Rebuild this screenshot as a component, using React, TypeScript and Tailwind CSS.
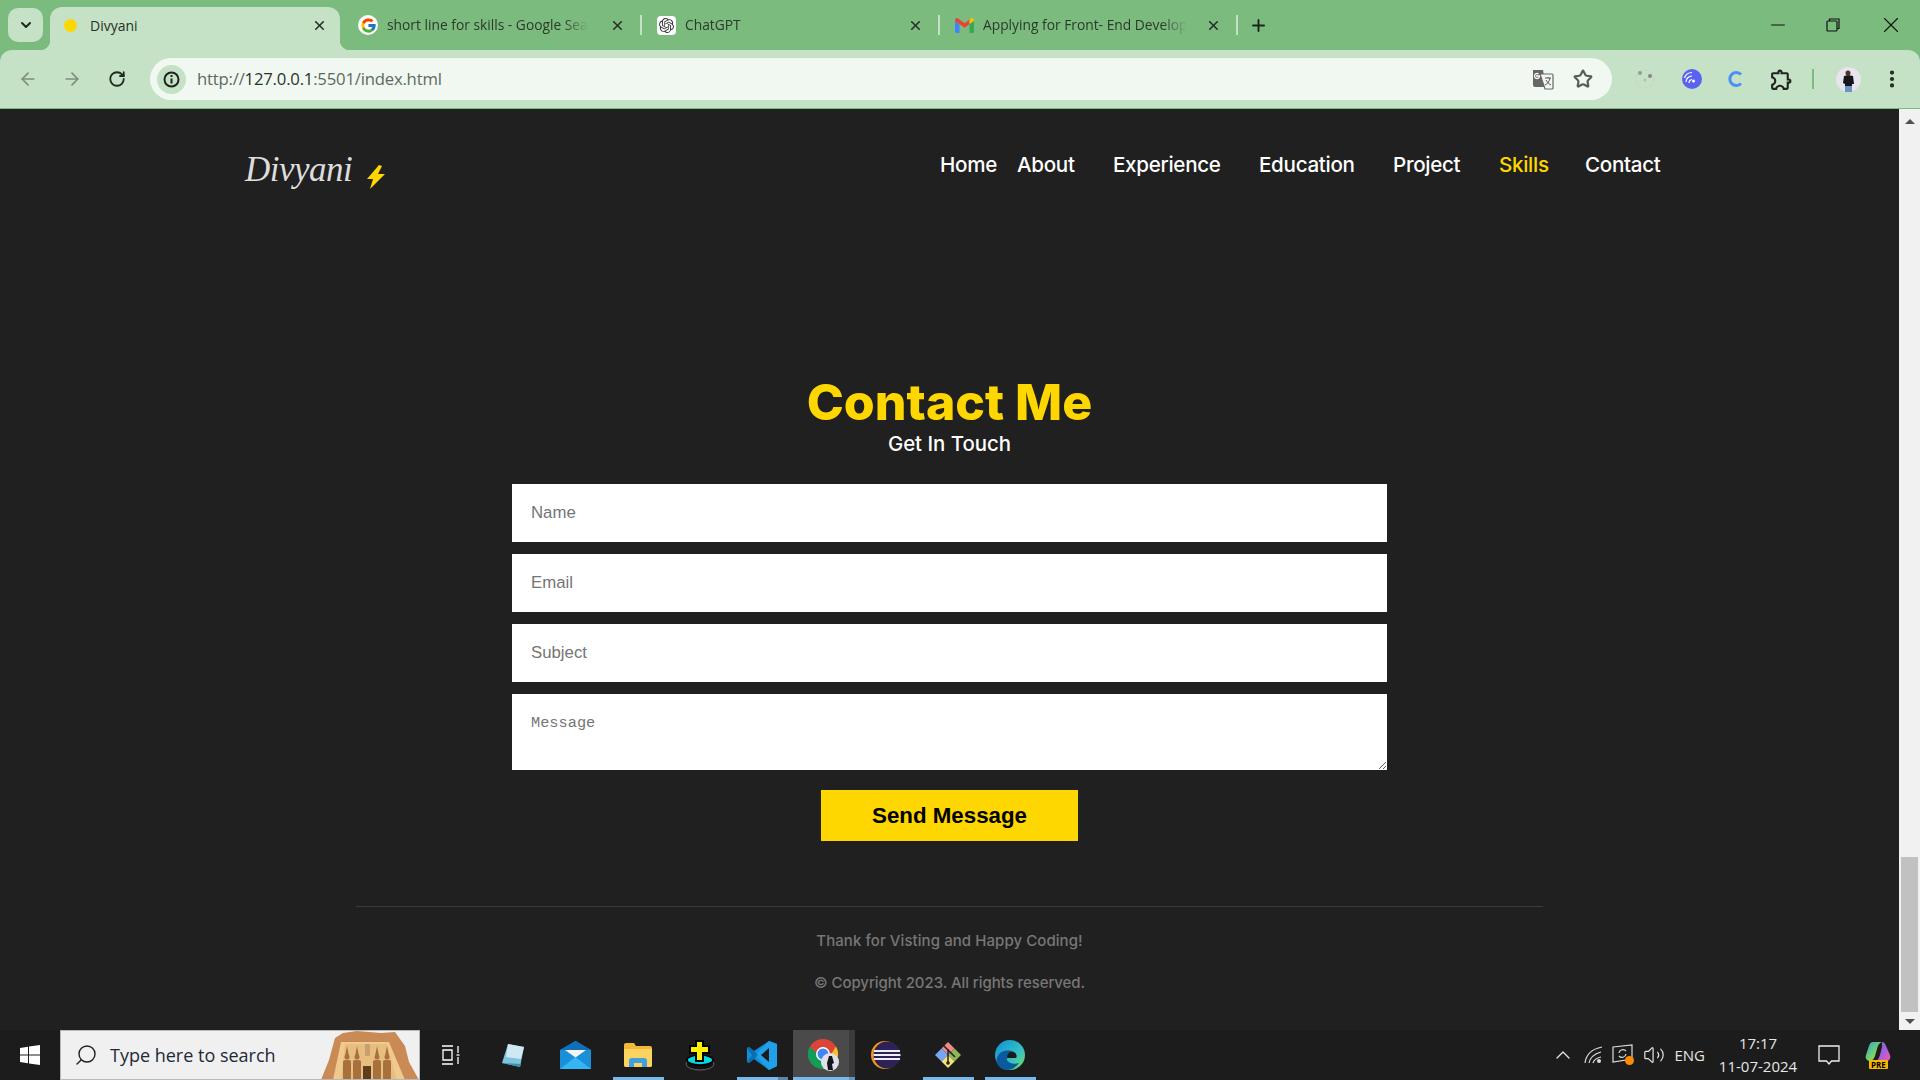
import React from 'react';
import { ArrowLeft, ArrowRight, RotateCw, Star, X, Plus, ChevronDown, Minus, ChevronUp, Search, EllipsisVertical, Volume2 } from 'lucide-react';
import { FcGoogle } from 'react-icons/fc';
import { SiOpenai } from 'react-icons/si';
import { MdOutlineExtension } from 'react-icons/md';

const navLinks = [
  { label: 'Home', cls: 'w-[77px]', color: 'text-white' },
  { label: 'About', cls: 'w-[96px]', color: 'text-white' },
  { label: 'Experience', cls: 'w-[146px]', color: 'text-white' },
  { label: 'Education', cls: 'w-[134px]', color: 'text-white' },
  { label: 'Project', cls: 'w-[106px]', color: 'text-white' },
  { label: 'Skills', cls: 'w-[86px]', color: 'text-[#ffd700]' },
  { label: 'Contact', cls: 'w-[78px]', color: 'text-white' },
];

const GmailIcon = () => (
  <svg width="19" height="15" viewBox="0 0 19 15">
    <path d="M0 3v10.500A1.500 1.500 0 0 0 1.500 15H4.500V6z" fill="#4285f4" />
    <path d="M14.500 6v9h3A1.500 1.500 0 0 0 19 13.500V3z" fill="#34a853" />
    <path d="M0 3l4.500 3 5 3.800 5-3.800V1.500L9.500 5.300 4.500 1.500 3 .4C1.500-.5 0 .8 0 2.400z" fill="#ea4335" />
    <path d="M14.500 1.500V6L19 3v-.6c0-1.600-1.500-2.900-3-2z" fill="#fbbc04" />
  </svg>
);

const ChromeTab: React.FC<{ icon: React.ReactNode; title: string; textCls: string }> = ({ icon, title, textCls }) => (
  <div className="flex items-center h-full shrink-0 w-[267px]">
    <div className="w-[20px] flex justify-center shrink-0">{icon}</div>
    <span className={`ml-[9px] whitespace-nowrap text-[13.8px] text-[#2b3a2c] [mask-image:linear-gradient(to_right,black_88%,transparent)] ${textCls}`}>{title}</span>
    <X size={15} strokeWidth={2.6} className="ml-auto text-[#2a2f2a] shrink-0" />
  </div>
);

const TabStrip = () => (
  <div className="h-[50px] shrink-0 bg-[#7bbb7e] flex font-['Open_Sans',sans-serif]">
    <div className="w-[35px] h-[34px] ml-[8px] mt-[8px] rounded-[10px] bg-[#c5e1c6] flex items-center justify-center">
      <ChevronDown size={16} strokeWidth={3} className="text-[#1f2a20]" />
    </div>
    <div className="relative w-[290px] h-[43px] ml-[7px] mt-[7px] rounded-t-[12px] bg-[#c5e1c6] flex items-center pl-[14px] pr-[13px] pb-[7px]">
      <span className="absolute left-[-10px] bottom-0 w-[10px] h-[10px] bg-[radial-gradient(circle_at_0_0,#7bbb7e_10px,#c5e1c6_10.5px)]" />
      <span className="absolute right-[-10px] bottom-0 w-[10px] h-[10px] bg-[radial-gradient(circle_at_100%_0,#7bbb7e_10px,#c5e1c6_10.5px)]" />
      <span className="w-[13px] h-[13px] rounded-full bg-[#ffd700]" />
      <span className="ml-[13px] text-[14px] text-[#253226]">Divyani</span>
      <X size={15} strokeWidth={2.6} className="ml-auto text-[#2a2f2a]" />
    </div>
    <div className="flex items-center h-[42px] mt-[4px] ml-[18px]">
      <ChromeTab icon={<span className="w-[20px] h-[20px] rounded-full bg-white flex items-center justify-center"><FcGoogle size={17} /></span>} title="short line for skills - Google Sea" textCls="w-auto" />
      <span className="w-[2px] h-[20px] bg-[#c5e1c6] ml-[15px] mr-[14px]" />
      <ChromeTab icon={<span className="w-[19px] h-[19px] rounded-[4px] bg-white flex items-center justify-center"><SiOpenai size={15} color="#333" /></span>} title="ChatGPT" textCls="w-[100px]" />
      <span className="w-[2px] h-[20px] bg-[#c5e1c6] ml-[15px] mr-[14px]" />
      <ChromeTab icon={<GmailIcon />} title="Applying for Front- End Develop" textCls="w-auto" />
      <span className="w-[2px] h-[20px] bg-[#c5e1c6] ml-[15px]" />
      <Plus size={19} strokeWidth={2.4} className="ml-[11px] text-[#1d261e]" />
    </div>
    <div className="ml-auto flex items-center h-[50px] text-[#111]">
      <Minus size={22} strokeWidth={1.1} className="mr-[37px]" />
      <svg width="14" height="14" viewBox="0 0 14 14" fill="none" stroke="#111" strokeWidth="1.2" className="mr-[38px]">
        <rect x="1" y="3" width="10" height="10" rx="1" />
        <path d="M3.500 3V1h9.500v9.500H11" />
      </svg>
      <X size={26} strokeWidth={1} className="mr-[16px]" />
    </div>
  </div>
);

const ToolbarIcons = () => (
  <div className="flex items-center h-full ml-[21px] text-[#2b342c]">
    <svg width="24" height="24" viewBox="0 0 24 24" className="mr-[24px]">
      <circle cx="12" cy="12" r="9" fill="none" stroke="#ccc" strokeWidth="1" strokeDasharray="3 3" />
      <circle cx="7" cy="6" r="2" fill="#999" />
      <circle cx="17" cy="9" r="2" fill="#888" />
      <circle cx="12" cy="13" r="1.500" fill="#bbb" />
    </svg>
    <svg width="22" height="22" viewBox="0 0 22 22" fill="none" className="mr-[23px]">
      <circle cx="11" cy="11" r="10" fill="#5a63f0" />
      <path d="M5 14a6 6 0 0 1 6-6M8 15a3.500 3.500 0 0 1 3-3.500M3.500 10A8 8 0 0 1 11 4.500" stroke="#fff" strokeWidth="1.200" />
      <circle cx="12.500" cy="13" r="1.500" fill="#fff" />
    </svg>
    <svg width="18" height="18" viewBox="0 0 18 18" fill="none" className="mr-[25px]">
      <path d="M15 4.500a6.500 6.500 0 1 0 0 9" stroke="#4a90f5" strokeWidth="3" />
    </svg>
    <MdOutlineExtension size={25} className="text-[#20261f] mr-[18px]" />
    <span className="w-[2px] h-[20px] bg-[#7bbb7e] mr-[22px]" />
    <svg width="25" height="25" viewBox="0 0 25 25" className="mr-[20px]">
      <circle cx="12.500" cy="12.500" r="12.500" fill="#e8e4ee" />
      <path d="M8 9l4-1 5 1 1 8h-2v8H9v-8l-2-1z" fill="#15151c" />
      <circle cx="12" cy="6" r="2.500" fill="#4a3428" />
      <path d="M9 19h7v6H9z" fill="#6b93c4" />
    </svg>
    <EllipsisVertical size={22} strokeWidth={2.6} className="text-[#1f2a20]" />
  </div>
);

const Toolbar = () => (
  <div className="h-[59px] shrink-0 bg-[#7bbb7e]">
    <div className="h-[58px] rounded-t-[12px] bg-[#c5e1c6] flex items-center pl-[18px] font-['Open_Sans',sans-serif]">
      <ArrowLeft size={20} strokeWidth={2} className="text-[#7d8e7f]" />
      <ArrowRight size={20} strokeWidth={2} className="text-[#7d8e7f] ml-[24px]" />
      <RotateCw size={18} strokeWidth={2.4} className="text-[#1f2a20] ml-[26px]" />
      <div className="ml-[24px] w-[1462px] h-[42px] rounded-full bg-[#f1f8f2] flex items-center pl-[7px] pr-[19px]">
        <span className="w-[29px] h-[29px] rounded-full bg-[#c5e1c6] flex items-center justify-center">
          <svg width="17" height="17" viewBox="0 0 17 17" fill="none" stroke="#1e241e" strokeWidth="2">
            <circle cx="8.500" cy="8.500" r="7" />
            <path d="M8.500 7.500v5M8.500 4v2" />
          </svg>
        </span>
        <span className="ml-[11px] text-[16.7px] tracking-[-0.2px] text-[#5c6a5e]">http://<span className="text-[#27352a]">127.0.0.1</span>:5501/index.html</span>
        <div className="ml-auto flex items-center">
          <svg width="22" height="22" viewBox="0 0 22 22" className="mr-[19px]">
            <path d="M1 2h10l3 17H3a2 2 0 0 1-2-2z" fill="#666" />
            <path d="M8 6h12a1 1 0 0 1 1 1v13a1 1 0 0 1-1 1h-7z" fill="#f1f8f2" stroke="#666" strokeWidth="1.200" />
            <path d="M4 8h3.500a2.500 2.500 0 1 1-1-2" fill="none" stroke="#fff" strokeWidth="1.300" />
            <path d="M13 10h6M16 9v1M18 10c-.5 3-2.500 6-5 7M14 12c1 2 3 4 5 5" fill="none" stroke="#555" strokeWidth="1" />
          </svg>
          <Star size={20} strokeWidth={2.6} className="text-[#555d56]" />
        </div>
      </div>
      <ToolbarIcons />
    </div>
  </div>
);

const Header = () => (
  <header className="h-[112px] shrink-0 flex items-center">
    <div className="ml-[245px] flex items-center w-[695px]">
      <span className="font-['Liberation_Serif',serif] italic text-[35px] leading-none text-[#dddddd] mt-[8px] tracking-[-0.5px] font-thin">Divyani</span>
      <svg width="18" height="24" viewBox="0 0 18 24" className="ml-[15px] mt-[23px]">
        <path d="M12 0L0 14h6L3 24 18 9h-7l4-8z" fill="#ffd700" />
      </svg>
    </div>
    <nav className="flex">
      {navLinks.map((link) => (
        <a key={link.label} className={`${link.cls} ${link.color} text-[20.6px] font-medium tracking-[-0.3px] whitespace-nowrap font-['Inter',sans-serif]`}>{link.label}</a>
      ))}
    </nav>
  </header>
);

const fieldCls = "w-full h-[58px] bg-white px-[19px] text-[16.8px] text-black placeholder:text-[#757575] font-['Liberation_Sans',sans-serif] outline-none";

const ContactForm = () => (
  <section className="flex flex-col items-center mt-[152px]">
    <h1 className="text-[50px] leading-[59px] font-extrabold text-[#ffd700] font-['Inter',sans-serif]">Contact Me</h1>
    <p className="text-[20.4px] leading-[24px] font-medium text-white font-['Inter',sans-serif]">Get In Touch</p>
    <form className="w-[875px] mt-[28px] flex flex-col items-center gap-[12px]">
      <input className={fieldCls} placeholder="Name" />
      <input className={fieldCls} placeholder="Email" />
      <input className={fieldCls} placeholder="Subject" />
      <textarea className="block w-full h-[76px] bg-white px-[19px] pt-[19px] pb-[15px] text-[15.3px] leading-[20px] text-black placeholder:text-[#757575] font-['Liberation_Mono',monospace] outline-none resize-y" placeholder="Message" />
      <button type="button" className="mt-[8px] w-[257px] h-[51px] bg-[#ffd700] text-black text-[22.3px] font-bold font-['Liberation_Sans',sans-serif]">Send Message</button>
    </form>
  </section>
);

const Footer = () => (
  <footer className="mt-[65px] mx-[356px] border-t border-[#3a3a3a] pt-[22px] flex flex-col items-center gap-[18px] text-[15px] leading-[24px] font-medium text-[#777777] font-['Inter',sans-serif]">
    <p className="tracking-[0.07px]">Thank for Visting and Happy Coding!</p>
    <p className="tracking-[-0.07px]">© Copyright 2023. All rights reserved.</p>
  </footer>
);

const Scrollbar = () => (
  <div className="w-[21px] shrink-0 bg-[#f1f1f1] flex flex-col items-center">
    <div className="h-[24px] flex items-center justify-center">
      <span className="w-0 h-0 border-x-[5px] border-x-transparent border-b-[5px] border-b-[#505050]" />
    </div>
    <div className="flex-1" />
    <div className="w-[17px] h-[155px] bg-[#c1c1c1]" />
    <div className="h-[18px] flex items-center justify-center">
      <span className="w-0 h-0 border-x-[5px] border-x-transparent border-t-[5px] border-t-[#505050]" />
    </div>
  </div>
);

const AbuSimbel = () => (
  <svg width="98" height="50" viewBox="0 0 98 50">
    <path d="M0 50L8 30 14 8 22 3 36 1 60 3 74 2 84 16 88 32 98 50z" fill="#c98a55" />
    <path d="M12 50L20 12H68L84 50z" fill="#f0c98f" />
    <path d="M20 50L24 14H66L76 50z" fill="#e8bd80" />
    <rect x="44" y="14" width="5" height="12" fill="#c9a06d" />
    <rect x="42" y="36" width="8" height="14" fill="#5e3d1b" />
    {[26, 36, 56, 66].map((x) => (
      <g key={x} fill="#a8703c">
        <path d={`M${x - 2} 26L${x} 16L${x + 2} 26z`} />
        <circle cx={x} cy="27" r="2.500" />
        <rect x={x - 4} y="30" width="8" height="20" rx="2" />
      </g>
    ))}
  </svg>
);

const taskSlot = "w-[62px] h-full shrink-0 flex items-center justify-center";

const Taskbar = () => (
  <div className="h-[50px] shrink-0 bg-[#1c1c1c] flex items-center font-['Open_Sans',sans-serif]">
    <div className="w-[60px] flex justify-center">
      <svg width="20" height="20" viewBox="0 0 20 20" fill="#fff">
        <path d="M0 3l8-1.200V9.500H0zM9 1.600L20 0v9.500H9zM0 10.500h8v7.700L0 17zM9 10.500h11V20L9 18.400z" />
      </svg>
    </div>
    <div className="w-[360px] h-full bg-[#f0f0f0] border border-[#b8b8b8] flex items-center overflow-hidden">
      <Search size={24} strokeWidth={1.400} className="ml-[13px] text-[#222] -scale-x-100" />
      <span className="ml-[12px] text-[18px] text-[#1e2a36]">Type here to search</span>
      <span className="ml-auto flex"><AbuSimbel /></span>
    </div>
    <div className={taskSlot}>
      <svg width="20" height="20" viewBox="0 0 20 20" fill="none" stroke="#fff" strokeWidth="1.300">
        <path d="M1 1h11M1 19h11M2 5h9v10H2zM17 1v7M17 12v7" />
        <path d="M15.500 10h3" />
      </svg>
    </div>
    <div className={taskSlot}>
      <svg width="28" height="28" viewBox="0 0 28 28">
        <path d="M9 3l16 3-4 20-18-4z" fill="#7fc4dc" />
        <path d="M9 3l16 3-3 12-15-2z" fill="#cfe9f4" />
        <path d="M3 22l18 4 1-3z" fill="#3f8fa8" />
      </svg>
    </div>
    <div className="w-[63px] h-full shrink-0 flex items-center justify-center">
      <svg width="31" height="28" viewBox="0 0 31 28">
        <path d="M15.500 0L31 9v19H0V9z" fill="#1a90d9" />
        <path d="M0 28l15.500-12L31 28z" fill="#35b6f2" />
        <path d="M15.500 0L31 9H0z" fill="#0f6fb8" />
        <path d="M5 9h21l-10.500 7.500z" fill="#f4f4f4" />
      </svg>
    </div>
    <div className={`${taskSlot} relative`}>
      <svg width="28" height="24" viewBox="0 0 28 24">
        <path d="M0 2a2 2 0 0 1 2-2h8l2 3h14a2 2 0 0 1 2 2v17a2 2 0 0 1-2 2H2a2 2 0 0 1-2-2z" fill="#f3b834" />
        <path d="M0 6h28v16a2 2 0 0 1-2 2H2a2 2 0 0 1-2-2z" fill="#fbd360" />
        <path d="M5 24v-6a3 3 0 0 1 3-3h12a3 3 0 0 1 3 3v6h-5v-4h-8v4z" fill="#3f9fdf" />
      </svg>
      <span className="absolute left-[6px] bottom-0 w-[51px] h-[3px] bg-[#76b9ed]" />
    </div>
    <div className={taskSlot}>
      <svg width="30" height="31" viewBox="0 0 30 31">
        <ellipse cx="15" cy="24" rx="14" ry="6" fill="#111" stroke="#666" strokeWidth="1" />
        <ellipse cx="15" cy="20" rx="13" ry="5" fill="#00d8e6" stroke="#000" strokeWidth="1.500" />
        <path d="M11 1h7v5h6v7h-6v8h-7v-8H5V6h6z" fill="#ffef00" stroke="#000" strokeWidth="2" />
      </svg>
    </div>
    <div className={`${taskSlot} relative`}>
      <svg width="30" height="30" viewBox="0 0 30 30">
        <path d="M22 1L30 4v22l-8 4L7 19l-5 4-2-1V8l2-1 5 4z" fill="#0e8fd8" />
        <path d="M22 1L8 15l14 15 8-4V4z" fill="#1fa0e8" />
        <path d="M22 8l-8 7 8 7z" fill="#1c1c1c" />
        <path d="M2 7l5 4 4 4-4 4-5 4-2-1 5-7-5-7z" fill="#0a6fb0" />
      </svg>
      <span className="absolute left-[6px] bottom-0 w-[41px] h-[3px] bg-[#76b9ed]" />
      <span className="absolute left-[47px] bottom-0 w-[10px] h-[3px] bg-[#5a86aa]" />
    </div>
    <div className={`${taskSlot} relative bg-[#4a4a4a]`}>
      <svg width="32" height="32" viewBox="0 0 32 32">
        <circle cx="15" cy="15" r="15" fill="#db4437" />
        <path d="M28 7.500A15 15 0 0 1 15 30l7-13z" fill="#fbc02d" />
        <path d="M2 7.500A15 15 0 0 0 15 30l7-13-7 4z" fill="#0f9d58" />
        <circle cx="15" cy="15" r="7" fill="#fff" />
        <circle cx="15" cy="15" r="5.500" fill="#4285f4" />
        <circle cx="22" cy="23" r="9" fill="#dfe1ea" />
        <path d="M21 17h3l2 7-2 1 1 6h-5l-1-7z" fill="#15151c" />
      </svg>
      <span className="absolute left-0 bottom-0 w-[56px] h-[3px] bg-[#76b9ed]" />
      <span className="absolute left-[56px] top-0 w-[6px] h-full bg-[#3b3b3b]" />
      <span className="absolute left-[56px] bottom-0 w-[6px] h-[3px] bg-[#6394bd]" />
    </div>
    <div className={taskSlot}>
      <svg width="30" height="28" viewBox="0 0 30 28">
        <circle cx="14" cy="14" r="14" fill="#f7941e" />
        <circle cx="16" cy="14" r="13.500" fill="#2c2255" />
        <path d="M3 10h26M2.500 14h27M3 18h26" stroke="#f0eef8" strokeWidth="2" />
      </svg>
    </div>
    <div className={`${taskSlot} relative`}>
      <svg width="30" height="30" viewBox="0 0 30 30">
        <path d="M15 2l6.500 6.500L15 15 8.500 8.500z" fill="#f08a8a" />
        <path d="M15 15l6.500-6.500L28 15l-6.500 6.500z" fill="#8fb855" />
        <path d="M2 15l6.500-6.500L15 15l-6.500 6.500z" fill="#75a7f5" />
        <path d="M15 15l6.500 6.500L15 28l-6.500-6.500z" fill="#f6e27d" />
        <path d="M15 9v14M10 5l5 5 7 7" stroke="#222" strokeWidth="1.500" fill="none" />
        <circle cx="15" cy="23" r="1.800" fill="#222" />
      </svg>
      <span className="absolute left-[6px] bottom-0 w-[51px] h-[3px] bg-[#76b9ed]" />
    </div>
    <div className={`${taskSlot} relative`}>
      <svg width="30" height="30" viewBox="0 0 30 30">
        <defs>
          <linearGradient id="edgeTop" x1="0" y1="0" x2="1" y2="1">
            <stop offset="0" stopColor="#0f8dd6" />
            <stop offset="0.6" stopColor="#35c1c4" />
            <stop offset="1" stopColor="#7bdc5a" />
          </linearGradient>
        </defs>
        <circle cx="15" cy="15" r="15" fill="url(#edgeTop)" />
        <path d="M2 18c2-8 12-9 17-6 3 2 3 5 2 6h-9c-1 4 5 7 12 5-3 4-7 7-12 7C6 30 0 24 2 18z" fill="#0c5a9e" />
        <path d="M12 18h9c1-2 .5-5-3-6-3-1-6 2-6 6z" fill="#1c1c1c" />
      </svg>
      <span className="absolute left-[6px] bottom-0 w-[51px] h-[3px] bg-[#76b9ed]" />
    </div>
    <div className="ml-auto flex items-center h-full text-[#e6e6e6]">
      <ChevronUp size={24} strokeWidth={1.300} />
      <svg width="20" height="18" viewBox="0 0 20 18" fill="none" stroke="#ddd" strokeWidth="1.200" className="ml-[9px]">
        <path d="M1 17C2 9 8 3 18 1M5 17c1-5 5-9 12-11M9 17c1-3 3-5 8-6" />
        <circle cx="15" cy="15" r="2" fill="#ddd" stroke="none" />
      </svg>
      <svg width="24" height="22" viewBox="0 0 24 22" fill="none" stroke="#ddd" strokeWidth="1.200" className="ml-[8px]">
        <path d="M1 3l19-2v14l-19 3z" />
        <path d="M7 9a4 4 0 0 1 7-2M14 10a4 4 0 0 1-7 2" />
        <circle cx="17.500" cy="16.500" r="4.500" fill="#ff8c00" stroke="none" />
      </svg>
      <Volume2 size={22} strokeWidth={1.300} className="ml-[7px]" />
      <span className="ml-[9px] text-[15px]">ENG</span>
      <div className="ml-[10px] w-[86px] flex flex-col items-center text-[15px] leading-[23px]">
        <span>17:17</span>
        <span>11-07-2024</span>
      </div>
      <svg width="22" height="22" viewBox="0 0 22 22" fill="none" stroke="#eee" strokeWidth="1.300" className="ml-[17px]">
        <path d="M1 2h20v15h-7.500L11 20l-2.500-3H1z" />
      </svg>
      <div className="relative ml-[25px] mr-[29px] w-[26px] h-[28px]">
        <svg width="26" height="24" viewBox="0 0 26 24">
          <defs>
            <linearGradient id="copilotL" x1="0" y1="0" x2="1" y2="1">
              <stop offset="0" stopColor="#2aa9e0" />
              <stop offset="0.6" stopColor="#7fd35f" />
              <stop offset="1" stopColor="#f0d24a" />
            </linearGradient>
            <linearGradient id="copilotR" x1="0" y1="0" x2="1" y2="1">
              <stop offset="0" stopColor="#5a6fe0" />
              <stop offset="0.6" stopColor="#b65cd8" />
              <stop offset="1" stopColor="#f05ba8" />
            </linearGradient>
          </defs>
          <path d="M8 1h9c-3 1-4 3-5 7l-2 7c-1 3-3 5-6 5-3-1-4-3-3-6l3-9c1-3 2-4 4-4z" fill="url(#copilotL)" />
          <path d="M17 1c2 0 3 1 4 4l4 9c1 4-1 6-4 6h-10c2-1 3-3 4-6l2-8c0-3 0-4 0-5z" fill="url(#copilotR)" />
        </svg>
        <span className="absolute left-[4px] bottom-0 px-[2px] bg-[#f5b800] rounded-[1px] text-[8px] leading-[9px] font-bold text-black">PRE</span>
      </div>
    </div>
  </div>
);

export default function App() {
  return (
    <div className="h-screen w-full flex flex-col overflow-hidden bg-[#202020]">
      <TabStrip />
      <Toolbar />
      <main className="flex-1 min-h-0 flex">
        <div className="flex-1 min-w-0 overflow-hidden">
          <Header />
          <ContactForm />
          <Footer />
        </div>
        <Scrollbar />
      </main>
      <Taskbar />
    </div>
  );
}
